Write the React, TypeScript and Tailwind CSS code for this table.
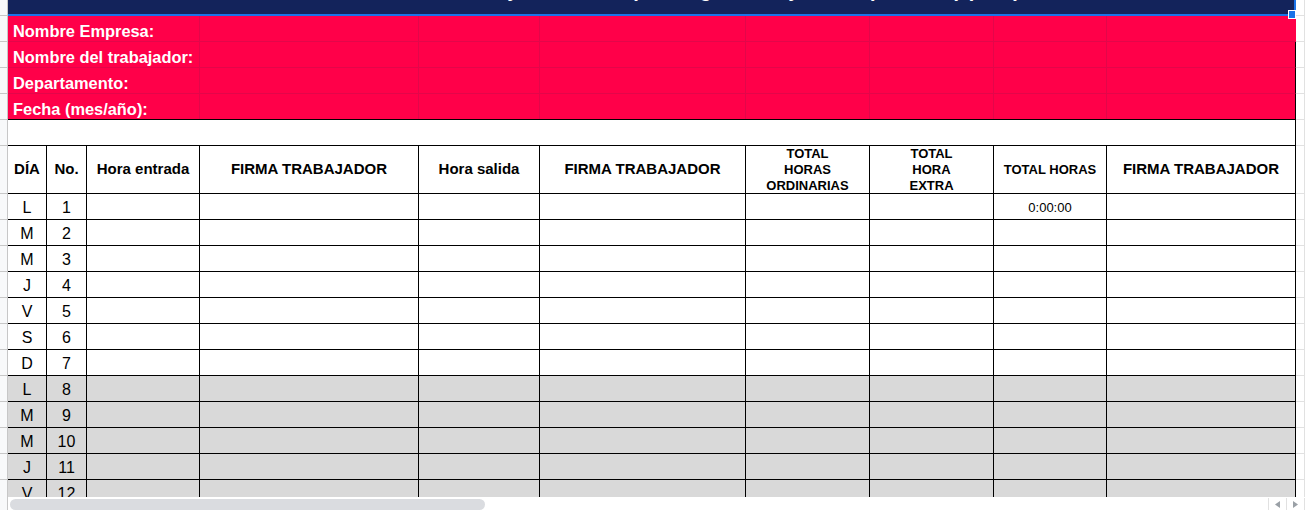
import React from "react";

const font = "font-['Liberation_Sans',Arial,sans-serif]";

const pinkCols = [
  "w-[219px]",
  "w-[121px]",
  "w-[206px]",
  "w-[124px]",
  "w-[124px]",
  "w-[113px]",
];

const labels = [
  "Nombre Empresa:",
  "Nombre del trabajador:",
  "Departamento:",
  "Fecha (mes/año):",
];

const colW = [
  "w-[39px]",
  "w-[40px]",
  "w-[113px]",
  "w-[219px]",
  "w-[121px]",
  "w-[206px]",
  "w-[124px]",
  "w-[124px]",
  "w-[113px]",
  "w-[189px]",
];

const days = ["L", "M", "M", "J", "V", "S", "D", "L", "M", "M", "J", "V"];

const Gutter = () => (
  <div className="w-[8px] shrink-0 bg-[#f8f9fa] border-r border-b border-[#c7c7c7]" />
);

const RightGutter = () => (
  <div className="w-[13px] shrink-0 flex">
    <div className="w-[9px] border-r border-b border-[#e1e1e1]" />
  </div>
);

const Header = ({ i }: { i: number }) => {
  const small = "text-[13px] leading-[16px] font-bold text-center";
  const big = "text-[15px] font-bold";
  switch (i) {
    case 0:
      return <span className={big}>DÍA</span>;
    case 1:
      return <span className={big}>No.</span>;
    case 2:
      return <span className={big}>Hora entrada</span>;
    case 4:
      return <span className={big}>Hora salida</span>;
    case 6:
      return (
        <span className={small}>
          TOTAL
          <br />
          HORAS
          <br />
          ORDINARIAS
        </span>
      );
    case 7:
      return (
        <span className={small}>
          TOTAL
          <br />
          HORA
          <br />
          EXTRA
        </span>
      );
    case 8:
      return <span className="text-[13px] font-bold">TOTAL HORAS</span>;
    default:
      return <span className={big}>FIRMA TRABAJADOR</span>;
  }
};

export default function App() {
  return (
    <div className={`w-[1309px] h-[510px] overflow-hidden bg-white flex flex-col text-black ${font}`}>
      <div className="h-[497px] overflow-hidden flex flex-col">
        {/* title row */}
        <div className="flex h-[16px] shrink-0">
          <Gutter />
          <div className="w-[1288px] shrink-0 relative bg-[#13235b] border-r-2 border-b-2 border-[#1a73e8]">
            <div className="h-[14px] overflow-hidden flex justify-center">
              <div className="-mt-[20px] ml-[200px] text-[20px] leading-[20px] font-bold text-white whitespace-nowrap">
                Hoja de control para registro de jornada (semanal) (mes)
              </div>
            </div>
            <div className="absolute right-[-2px] top-[10px] w-[8px] h-[9px] bg-[#1a73e8] border border-white z-10" />
          </div>
          <RightGutter />
        </div>

        {/* pink info rows */}
        {labels.map((label, r) => (
          <div key={label} className="flex h-[26px] shrink-0">
            <Gutter />
            <div
              className={`w-[1288px] shrink-0 flex bg-[#ff0049] border-b ${
                r === 3 ? "border-black" : "border-[#e3064a]"
              } ${r === 0 ? "" : "border-r border-r-black"}`}
            >
              <div className="w-[192px] shrink-0 border-r border-[#e3064a] flex items-end pl-[5px] pb-0 text-[16.4px] leading-[19px] font-bold text-white whitespace-nowrap">
                {label}
              </div>
              {pinkCols.map((w, c) => (
                <div key={c} className={`${w} shrink-0 border-r border-[#e3064a]`} />
              ))}
              <div className="flex-1" />
            </div>
            <RightGutter />
          </div>
        ))}

        {/* blank row */}
        <div className="flex h-[26px] shrink-0">
          <Gutter />
          <div className="w-[1288px] shrink-0 border-b border-r border-black" />
          <RightGutter />
        </div>

        {/* header row */}
        <div className="flex h-[48px] shrink-0">
          <Gutter />
          <div className="w-[1288px] shrink-0 flex">
            {colW.map((w, i) => (
              <div
                key={i}
                className={`${w} shrink-0 border-r border-b border-black flex items-center justify-center whitespace-nowrap`}
              >
                <Header i={i} />
              </div>
            ))}
          </div>
          <RightGutter />
        </div>

        {/* data rows */}
        {days.map((d, r) => (
          <div key={r} className="flex h-[26px] shrink-0">
            <Gutter />
            <div className={`w-[1288px] shrink-0 flex ${r >= 7 ? "bg-[#d9d9d9]" : ""}`}>
              {colW.map((w, i) => (
                <div
                  key={i}
                  className={`${w} shrink-0 border-r border-b border-black flex items-end justify-center pb-[2px] leading-[19px] ${
                    i === 8 ? "text-[13px]" : "text-[16px]"
                  }`}
                >
                  {i === 0 ? d : i === 1 ? r + 1 : i === 8 && r === 0 ? "0:00:00" : ""}
                </div>
              ))}
            </div>
            <RightGutter />
          </div>
        ))}
      </div>

      {/* horizontal scrollbar */}
      <div className="flex h-[13px] shrink-0">
        <div className="w-[8px] shrink-0 bg-[#f8f9fa] border-r border-[#c7c7c7]" />
        <div className="flex-1 flex items-end">
          <div className="ml-[2px] w-[475px] h-[11px] rounded-full bg-[#dadce0]" />
          <div className="flex-1" />
          <div className="flex h-[12px] mr-[4px] border-l border-[#e1e1e1]">
            <div className="w-[18px] flex items-center justify-center border-r border-[#e1e1e1]">
              <svg width="5" height="7" viewBox="0 0 5 7">
                <path d="M5 0 L0 3.5 L5 7 Z" fill="#9aa0a6" />
              </svg>
            </div>
            <div className="w-[18px] flex items-center justify-center border-r border-[#e1e1e1]">
              <svg width="5" height="7" viewBox="0 0 5 7">
                <path d="M0 0 L5 3.5 L0 7 Z" fill="#9aa0a6" />
              </svg>
            </div>
          </div>
        </div>
      </div>
    </div>
  );
}
